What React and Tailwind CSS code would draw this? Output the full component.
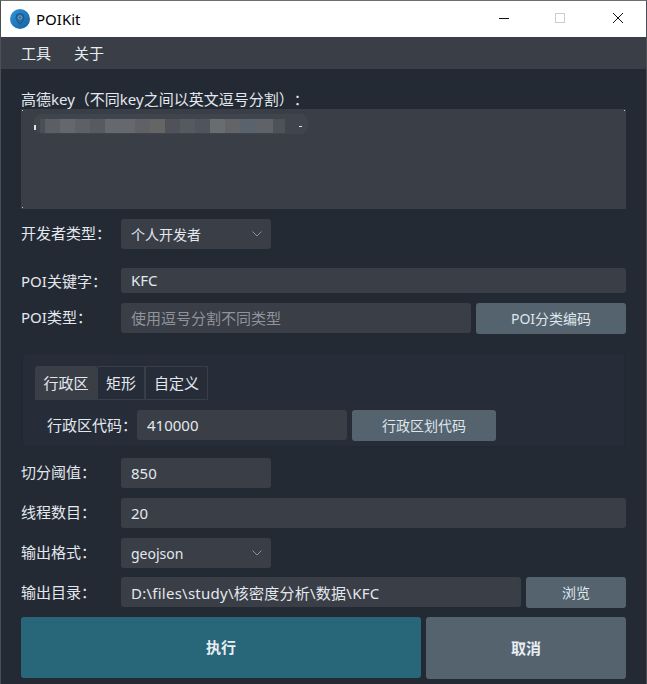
import React from "react";

const inputCls = "h-[30px] rounded-[3px] bg-[#3a3e47] px-[10px] text-[15px] text-[#e3e8ee] outline-none";
const buttonCls = "h-[31px] rounded-[3px] bg-[#54636e] text-[14px] text-[#dfe6ec]";
const labelCls = "text-[15px] leading-[20px] text-[#e3e8ee] [text-spacing-trim:space-all]";

const blurBlocks = [
  ["w-[5px]", "bg-[#4a4e55]"],
  ["w-[15px]", "bg-[#5b5e65]"],
  ["w-[15px]", "bg-[#64676e]"],
  ["w-[15px]", "bg-[#5d6067]"],
  ["w-[15px]", "bg-[#575a61]"],
  ["w-[30px]", "bg-[#65686e]"],
  ["w-[15px]", "bg-[#5f6167]"],
  ["w-[15px]", "bg-[#656566]"],
  ["w-[15px]", "bg-[#4f5359]"],
  ["w-[15px]", "bg-[#555a61]"],
  ["w-[15px]", "bg-[#4e555c]"],
  ["w-[15px]", "bg-[#6a6d70]"],
  ["w-[15px]", "bg-[#626468]"],
  ["w-[15px]", "bg-[#59636d]"],
  ["w-[18px]", "bg-[#5f6268]"],
  ["w-[12px]", "bg-[#4e5157]"],
];

function Chevron() {
  return (
    <svg width="10" height="6" viewBox="0 0 10 6" fill="none" stroke="#8a8f97" strokeWidth="1">
      <path d="M0.5 0.5 L5 5 L9.5 0.5" />
    </svg>
  );
}

function Select({ value }) {
  return (
    <div className="flex h-[30px] w-[150px] items-center justify-between rounded-[3px] bg-[#3a3e47] pl-[10px] pr-[9px] text-[14px] text-[#e3e8ee]">
      <span>{value}</span>
      <Chevron />
    </div>
  );
}

function Field({ label, children, className = "", labelWidth = "w-[100px]" }) {
  return (
    <div className={"flex items-start " + className}>
      <div className={labelCls + " " + labelWidth + " mt-[4px]"}>{label}</div>
      {children}
    </div>
  );
}

function AppIcon() {
  return (
    <svg width="20" height="20" viewBox="0 0 20 20">
      <defs>
        <linearGradient id="ic" x1="0" y1="0" x2="1" y2="1">
          <stop offset="0" stopColor="#2f95dc" />
          <stop offset="1" stopColor="#14609f" />
        </linearGradient>
      </defs>
      <circle cx="10" cy="10" r="10" fill="url(#ic)" />
      <path d="M10 4.5a4 4 0 0 1 4 4c0 2.6-2.6 5-4 7-1.4-2-4-4.400-4-7a4 4 0 0 1 4-4z" fill="#2a6a9c" stroke="#1b4f7a" strokeWidth="0.8" />
      <circle cx="10" cy="8.500" r="1.800" fill="none" stroke="#7fb4d8" strokeWidth="0.8" />
    </svg>
  );
}

export default function App() {
  return (
    <div
      lang="zh-CN"
      className="flex h-[684px] w-[647px] flex-col border-x border-t border-x-[#4b4f56] border-t-[#6e6e6e] bg-[#232a34] font-['Noto_Sans','Noto_Sans_CJK_SC',sans-serif]"
    >
      {/* title bar */}
      <div className="flex h-[36px] shrink-0 items-center bg-white pl-[9px]">
        <AppIcon />
        <span className="ml-[6px] text-[15px] text-black">POIKit</span>
        <div className="mb-[2px] ml-auto flex items-center">
          <svg width="12" height="12" viewBox="0 0 12 12" className="mr-[44px]">
            <path d="M1 6.500 H11" stroke="#111" strokeWidth="1" />
          </svg>
          <svg width="12" height="12" viewBox="0 0 12 12" className="mr-[46px]">
            <rect x="1.500" y="1.500" width="9" height="9" fill="none" stroke="#ccc" strokeWidth="1" />
          </svg>
          <svg width="12" height="12" viewBox="0 0 12 12" className="mr-[22px]">
            <path d="M1 1 L11 11 M11 1 L1 11" stroke="#111" strokeWidth="1" />
          </svg>
        </div>
      </div>

      {/* menu */}
      <div className="flex h-[32px] shrink-0 items-center gap-[23px] bg-[#3a3e47] pl-[20px] text-[15px] text-[#e8edf2]">
        <span>工具</span>
        <span>关于</span>
      </div>

      <div className="flex flex-1 flex-col px-[20px]">
        <div className={labelCls + " mt-[20px] h-[20px] whitespace-nowrap"}>高德key（不同key之间以英文逗号分割）：</div>

        <div className="relative h-[100px] shrink-0 bg-[#3a3e47]">
          {/* blurred-out key */}
          <div className="absolute left-[13px] top-[5px] h-[20px] w-[274px] rounded-[8px] bg-[#40444c]" />
          <div className="absolute left-[19px] top-[10px] flex h-[14px]">
            {blurBlocks.map(([w, c], i) => (
              <div key={i} className={w + " " + c} />
            ))}
          </div>
          <div className="absolute left-[13px] top-[16px] h-[5px] w-[2px] bg-[#dfe3e8]" />
          <div className="absolute left-[278px] top-[17px] h-[1px] w-[3px] bg-[#dfe3e8]" />
          {/* corner specks */}
          <div className="absolute left-[1px] top-[1px] h-[1px] w-[1px] bg-[#c8ccd2]" />
          <div className="absolute bottom-[1px] left-[1px] h-[1px] w-[1px] bg-[#c8ccd2]" />
          <div className="absolute right-[1px] top-[1px] h-[1px] w-[1px] bg-[#c8ccd2]" />
        </div>

        <Field label="开发者类型：" className="mt-[10px]">
          <Select value="个人开发者" />
        </Field>

        <div className="mt-[19px] flex h-[25px] items-center">
          <div className={labelCls + " w-[100px] mt-[1px]"}>POI关键字：</div>
          <div className="flex h-[25px] flex-1 items-center rounded-[3px] bg-[#3a3e47] px-[10px] text-[15px] text-[#e3e8ee]">KFC</div>
        </div>

        <Field label="POI类型：" className="mt-[10px] h-[31px]">
          <input className={inputCls + " w-[350px] placeholder:text-[#8f949b]"} placeholder="使用逗号分割不同类型" readOnly />
          <button className={buttonCls + " ml-[5px] w-[150px]"}>POI分类编码</button>
        </Field>

        {/* region group */}
        <div className="mx-[1px] mt-[19px] h-[94px] shrink-0 border border-[#222833] bg-[#262d39] pl-[12px] pt-[12px]">
          <div className="flex h-[34px] text-[15px] text-[#e3e8ee]">
            <div className="flex w-[62px] items-center justify-center rounded-t-[3px] bg-[#3a3e47]">行政区</div>
            <div className="flex w-[48px] items-center justify-center border border-[#3a3e47]">矩形</div>
            <div className="flex w-[63px] items-center justify-center border border-[#3a3e47]">自定义</div>
          </div>
          <div className="mt-[10px] flex items-start">
            <div className={labelCls + " ml-[12px] w-[90px] mt-[5px] whitespace-nowrap"}>行政区代码：</div>
            <input className={inputCls + " w-[210px]"} defaultValue="410000" readOnly />
            <button className={buttonCls + " ml-[5px] w-[144px]"}>行政区划代码</button>
          </div>
        </div>

        <Field label="切分阈值：" className="mt-[11px]">
          <input className={inputCls + " w-[150px]"} defaultValue="850" readOnly />
        </Field>

        <Field label="线程数目：" className="mt-[10px]">
          <input className={inputCls + " flex-1"} defaultValue="20" readOnly />
        </Field>

        <Field label="输出格式：" className="mt-[10px]">
          <Select value="geojson" />
        </Field>

        <div className="mt-[9px] flex h-[31px] items-start">
          <div className={labelCls + " mt-[5px] w-[100px]"}>输出目录：</div>
          <input className={inputCls + " w-[400px] tracking-[0.25px]"} defaultValue="D:\files\study\核密度分析\数据\KFC" readOnly />
          <button className={buttonCls + " ml-[5px] w-[100px]"}>浏览</button>
        </div>

        <div className="mt-[9px] flex items-start gap-[5px]">
          <button className="h-[61px] w-[400px] rounded-[3px] bg-[#28677a] text-[15px] font-bold text-[#e8edf2]">执行</button>
          <button className="h-[62px] w-[200px] rounded-[3px] bg-[#54636e] text-[15px] font-bold text-[#e8edf2]">取消</button>
        </div>
      </div>
    </div>
  );
}
